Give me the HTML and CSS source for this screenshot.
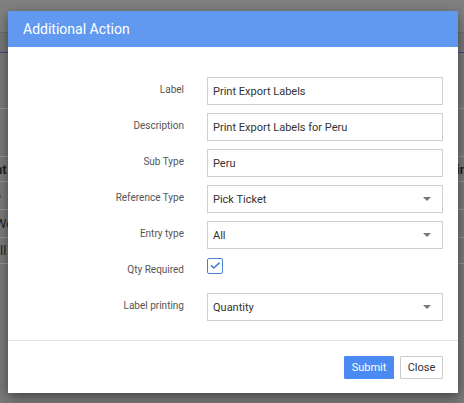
FILE: index.html
```html
<!DOCTYPE html>
<html>
<head>
<meta charset="utf-8">
<link rel="stylesheet" href="styles.css">
</head>
<body>
<div class="page">
  <div class="topbar"></div>
  <div class="subbar"></div>
  <div class="spacer"></div>
  <div class="table">
    <div class="trow head"><span>nt</span><span>in</span></div>
    <div class="trow"><span class="arrow">&#8250;</span><span></span></div>
    <div class="trow"><span>We</span><span></span></div>
    <div class="trow last"><span class="ll">ll</span><span></span></div>
  </div>
</div>

<div class="modal">
  <div class="modal-header">Additional Action</div>
  <div class="modal-body">
    <div class="form">
      <div class="lbl">Label</div>
      <div class="ctl input">Print Export Labels</div>

      <div class="lbl">Description</div>
      <div class="ctl input">Print Export Labels for Peru</div>

      <div class="lbl">Sub Type</div>
      <div class="ctl input">Peru</div>

      <div class="lbl">Reference Type</div>
      <div class="ctl input select"><span>Pick Ticket</span><svg class="caret" width="8" height="4" viewBox="0 0 8 4"><path d="M0 0H8L4 4Z" fill="#777"/></svg></div>

      <div class="lbl">Entry type</div>
      <div class="ctl input select"><span>All</span><svg class="caret" width="8" height="4" viewBox="0 0 8 4"><path d="M0 0H8L4 4Z" fill="#777"/></svg></div>

      <div class="lbl">Qty Required</div>
      <div class="ctl"><span class="checkbox"><svg width="16" height="16" viewBox="0 0 16 16"><path d="M4 7.3L6.8 10L12.6 4.6" fill="none" stroke="#4a7fd3" stroke-width="1.6"/></svg></span></div>

      <div class="lbl">Label printing</div>
      <div class="ctl input select"><span>Quantity</span><svg class="caret" width="8" height="4" viewBox="0 0 8 4"><path d="M0 0H8L4 4Z" fill="#777"/></svg></div>
    </div>
  </div>
  <div class="modal-footer">
    <button class="btn btn-primary">Submit</button>
    <button class="btn btn-default">Close</button>
  </div>
</div>
</body>
</html>
```

FILE: styles.css
```css
html, body {
  margin: 0;
  padding: 0;
}
body {
  width: 464px;
  height: 403px;
  overflow: hidden;
  background: #7a7a7a;
  font-family: Roboto, "Liberation Sans", sans-serif;
  position: relative;
}
.page {
  display: flex;
  flex-direction: column;
}
.topbar {
  height: 32px;
  background: #808080;
  border-bottom: 1px solid #6e6e6e;
}
.subbar {
  height: 19px;
  background: #777777;
  border-bottom: 1px solid #3b4f80;
}
.spacer {
  height: 55px;
  border-bottom: 1px solid #959595;
}
.table {
  margin-top: 47px;
  border-top: 1px solid #959595;
}
.trow {
  display: flex;
  justify-content: space-between;
  align-items: center;
  height: 27px;
  border-bottom: 1px solid #959595;
  margin-left: -5px;
  margin-right: -3px;
  font-size: 13px;
  color: #222;
}
.trow.head {
  height: 24px;
  font-weight: 700;
}
.trow.last {
  height: 25px;
}
.arrow {
  font-size: 12px;
  color: #444;
  padding-left: 3px;
}
.ll {
  padding-left: 5px;
  color: #222;
}

.modal {
  position: absolute;
  left: 8px;
  top: 11px;
  width: 450px;
  background: #fff;
  box-shadow: 0 4px 12px rgba(0, 0, 0, 0.45);
}
.modal-header {
  height: 36px;
  line-height: 36px;
  background: #6099ef;
  color: #fff;
  font-size: 14px;
  padding-left: 15px;
}
.modal-body {
  padding: 30px 15px 19px 0;
}
.form {
  display: grid;
  grid-template-columns: 176px 236px;
  column-gap: 23px;
  row-gap: 8px;
}
.lbl {
  text-align: right;
  font-size: 10px;
  color: #555;
  padding-top: 5px;
  line-height: 16px;
  height: 23px;
}
.ctl {
  height: 28px;
  box-sizing: border-box;
}
.input {
  border: 1px solid #cfcfcf;
  padding-left: 5px;
  font-size: 11px;
  color: #333;
  display: flex;
  align-items: center;
}
.select {
  justify-content: space-between;
  padding-right: 11px;
}
.caret {
  display: block;
}
.checkbox {
  display: block;
  width: 16px;
  height: 16px;
  margin-top: 1px;
  box-sizing: border-box;
  border: 1px solid #4a7fd3;
  border-radius: 2px;
}
.checkbox svg {
  display: block;
  margin: -1px 0 0 -1px;
}
.modal-footer {
  border-top: 1px solid #e3e3e3;
  padding: 15px 15px 14px 0;
  display: flex;
  justify-content: flex-end;
  gap: 6px;
}
.btn {
  height: 23px;
  font-family: Roboto, "Liberation Sans", sans-serif;
  font-size: 11px;
  padding: 0 6px;
  margin: 0;
  border-radius: 1px;
  cursor: pointer;
}
.btn-primary {
  background: #4a8af2;
  color: #fff;
  border: 1px solid #4a8af2;
  width: 50px;
}
.btn-default {
  background: #fff;
  color: #333;
  border: 1px solid #cccccc;
  width: 43px;
}
```
